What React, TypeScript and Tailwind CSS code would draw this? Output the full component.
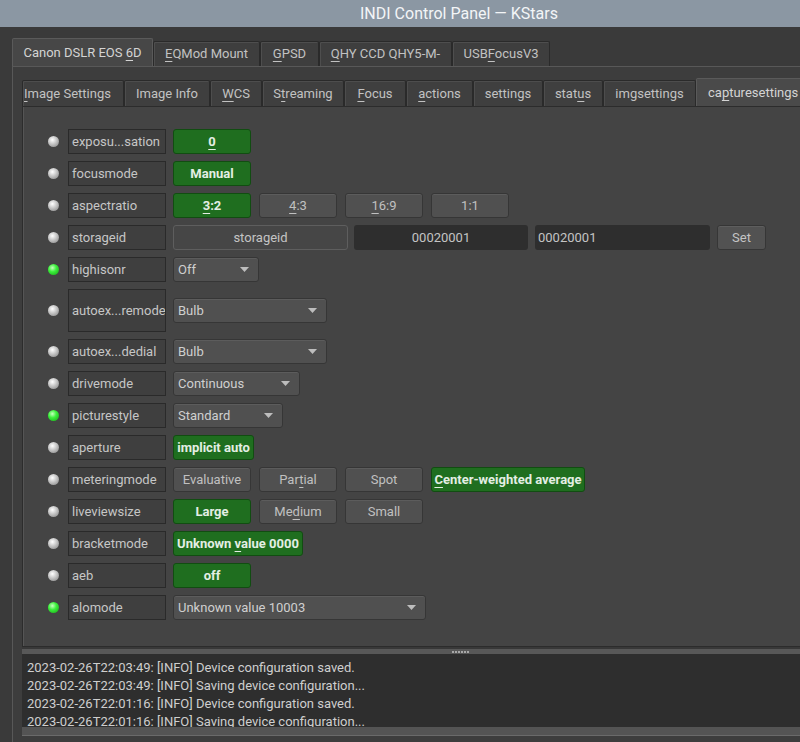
import React from 'react';

// "&" marks the mnemonic letter, drawn underlined like a Qt accelerator
function M({ t }: { t: string }) {
  const i = t.indexOf('&');
  if (i < 0) return <span>{t}</span>;
  return (
    <span className="whitespace-pre">
      {t.slice(0, i)}
      <span className="underline underline-offset-[3px] decoration-1">{t[i + 1]}</span>
      {t.slice(i + 2)}
    </span>
  );
}

type Btn = { t: string; on?: boolean; w?: string };
type Row =
  | { led: 'gray' | 'green'; label: string; kind: 'switch'; btns: Btn[] }
  | { led: 'gray' | 'green'; label: string; kind: 'combo'; value: string; w: string; tall?: boolean }
  | { led: 'gray' | 'green'; label: string; kind: 'text' };

const rows: Row[] = [
  { led: 'gray', label: 'exposu...sation', kind: 'switch', btns: [{ t: '&0', on: true }] },
  { led: 'gray', label: 'focusmode', kind: 'switch', btns: [{ t: 'Manual', on: true }] },
  {
    led: 'gray',
    label: 'aspectratio',
    kind: 'switch',
    btns: [{ t: '&3:2', on: true }, { t: '&4:3' }, { t: '&16:9' }, { t: '1:1' }],
  },
  { led: 'gray', label: 'storageid', kind: 'text' },
  { led: 'green', label: 'highisonr', kind: 'combo', value: 'Off', w: 'w-[86px]' },
  { led: 'gray', label: 'autoex...remode', kind: 'combo', value: 'Bulb', w: 'w-[154px]', tall: true },
  { led: 'gray', label: 'autoex...dedial', kind: 'combo', value: 'Bulb', w: 'w-[154px]' },
  { led: 'gray', label: 'drivemode', kind: 'combo', value: 'Continuous', w: 'w-[127px]' },
  { led: 'green', label: 'picturestyle', kind: 'combo', value: 'Standard', w: 'w-[110px]' },
  { led: 'gray', label: 'aperture', kind: 'switch', btns: [{ t: 'implicit auto', on: true, w: 'w-[81px]' }] },
  {
    led: 'gray',
    label: 'meteringmode',
    kind: 'switch',
    btns: [
      { t: 'Evaluative' },
      { t: 'Par&tial' },
      { t: 'Spot' },
      { t: '&Center-weighted average', on: true, w: 'w-[154px]' },
    ],
  },
  {
    led: 'gray',
    label: 'liveviewsize',
    kind: 'switch',
    btns: [{ t: 'Large', on: true }, { t: 'Me&dium' }, { t: 'Small' }],
  },
  { led: 'gray', label: 'bracketmode', kind: 'switch', btns: [{ t: 'Unknown &value 0000', on: true, w: 'w-[130px]' }] },
  { led: 'gray', label: 'aeb', kind: 'switch', btns: [{ t: 'off', on: true }] },
  { led: 'green', label: 'alomode', kind: 'combo', value: 'Unknown value 10003', w: 'w-[253px]' },
];

const deviceTabs = [
  { t: 'Canon DSLR EOS &6D', w: 'w-[141px]', sel: true },
  { t: '&EQMod Mount', w: 'w-[107px]' },
  { t: '&GPSD', w: 'w-[59px]' },
  { t: '&QHY CCD QHY5-M-', w: 'w-[133px]' },
  { t: 'USB&FocusV3', w: 'w-[98px]' },
];

const groupTabs = [
  { t: '&Image Settings', w: 'w-[102px]', first: true },
  { t: 'Image Info', w: 'w-[86px]' },
  { t: '&WCS', w: 'w-[52px]' },
  { t: 'S&treaming', w: 'w-[82px]' },
  { t: '&Focus', w: 'w-[62px]' },
  { t: '&actions', w: 'w-[67px]' },
  { t: 'settings', w: 'w-[70px]' },
  { t: 'stat&us', w: 'w-[60px]' },
  { t: 'imgsettings', w: 'w-[93px]' },
  { t: 'ca&pturesettings', w: 'w-[120px]', sel: true },
];

const logLines = [
  '2023-02-26T22:03:49: [INFO] Device configuration saved.',
  '2023-02-26T22:03:49: [INFO] Saving device configuration...',
  '2023-02-26T22:01:16: [INFO] Device configuration saved.',
  '2023-02-26T22:01:16: [INFO] Saving device configuration...',
];

function Led({ c }: { c: 'gray' | 'green' }) {
  return (
    <div
      className={
        'w-[11px] h-[11px] rounded-full shrink-0 ' +
        (c === 'green'
          ? 'bg-[radial-gradient(circle_at_40%_35%,#c8ffc0,#3cf03c_40%,#14a014)]'
          : 'bg-[radial-gradient(circle_at_40%_35%,#ffffff,#c4c4c4_45%,#7c7c7c)]')
      }
    />
  );
}

function Arrow() {
  return (
    <svg width="9" height="5" viewBox="0 0 9 5" className="shrink-0">
      <path d="M0 0 L9 0 L4.5 5 Z" fill="#bdbdbd" />
    </svg>
  );
}

function Button({ b }: { b: Btn }) {
  return (
    <div
      className={
        'h-[25px] rounded-[3px] border flex items-center justify-center whitespace-nowrap text-[13px] ' +
        (b.w ?? 'w-[78px]') +
        ' ' +
        (b.on
          ? 'bg-[#1f6e1f] border-[#114d11] text-[#e4eee4] font-bold'
          : 'bg-[#505050] border-[#363636] text-[#c0c0c0] shadow-[inset_0_1px_0_#5c5c5c]')
      }
    >
      <M t={b.t} />
    </div>
  );
}

function Control({ r }: { r: Row }) {
  if (r.kind === 'switch') {
    return (
      <div className="flex gap-[8px]">
        {r.btns.map((b, i) => (
          <Button key={i} b={b} />
        ))}
      </div>
    );
  }
  if (r.kind === 'combo') {
    return (
      <div
        className={
          'h-[25px] rounded-[3px] border border-[#363636] bg-[#505050] shadow-[inset_0_1px_0_#5c5c5c] flex items-center justify-between pl-[4px] pr-[9px] text-[13px] text-[#cfcfcf] ' +
          r.w
        }
      >
        <span>{r.value}</span>
        <Arrow />
      </div>
    );
  }
  return (
    <div className="flex items-center">
      <div className="w-[175px] h-[25px] rounded-[3px] border border-[#5e5e5e] bg-[#464646] flex items-center justify-center text-[13px] text-[#c4c4c4]">
        storageid
      </div>
      <div className="ml-[6px] w-[174px] h-[25px] rounded-[3px] bg-[#2e2e2e] flex items-center justify-center text-[13px] text-[#c4c4c4]">
        00020001
      </div>
      <div className="ml-[7px] w-[175px] h-[25px] rounded-[3px] bg-[#2e2e2e] flex items-center pl-[3px] text-[13px] text-[#c4c4c4]">
        00020001
      </div>
      <div className="ml-[7px] w-[49px] h-[25px] rounded-[3px] border border-[#363636] bg-[#525252] shadow-[inset_0_1px_0_#5e5e5e] flex items-center justify-center text-[13px] text-[#c4c4c4]">
        Set
      </div>
    </div>
  );
}

export default function App() {
  return (
    <div className="w-[800px] h-[742px] overflow-hidden bg-[#3a3a3a] flex flex-col font-['Roboto','Noto_Sans',sans-serif]">
      {/* window title */}
      <div className="h-[27px] shrink-0 bg-[#8b97a3] flex items-center pl-[360px] text-[16px] text-[#f3f5f7] whitespace-nowrap">
        INDI Control Panel — KStars
      </div>

      <div className="flex-1 flex flex-col pl-[12px] pt-[11px] min-h-0">
        {/* device tabs */}
        <div className="h-[28px] shrink-0 flex items-end">
          {deviceTabs.map((d, i) => (
            <div
              key={i}
              className={
                'shrink-0 flex items-center justify-center whitespace-nowrap text-[13px] border border-b-0 rounded-t-[2px] ' +
                d.w +
                ' ' +
                (d.sel
                  ? 'h-[28px] bg-[#474747] border-[#5a5a5a] text-[#d4d4d4]'
                  : 'h-[25px] bg-[#3e3e3e] border-[#2a2a2a] shadow-[inset_1px_1px_0_#4e4e4e] text-[#c2c2c2]')
              }
            >
              <M t={d.t} />
            </div>
          ))}
        </div>

        {/* device page */}
        <div className="flex-1 flex flex-col border-l border-t border-[#585858] bg-[#3d3d3d] pl-[9px] pt-[11px] min-h-0">
          {/* group tabs */}
          <div className="h-[28px] shrink-0 flex items-end overflow-hidden">
            {groupTabs.map((g, i) => (
              <div
                key={i}
                className={
                  'shrink-0 flex items-center whitespace-nowrap text-[13px] border border-b-0 rounded-t-[2px] ' +
                  g.w +
                  ' ' +
                  (g.first ? 'justify-start pl-[1px] ' : 'justify-center ') +
                  (g.sel
                    ? 'h-[28px] bg-[#4a4a4a] border-[#5a5a5a] text-[#d4d4d4] justify-start pl-[11px]'
                    : 'h-[26px] bg-[#3f3f3f] border-[#2a2a2a] shadow-[inset_1px_1px_0_#4d4d4d] text-[#c2c2c2]')
                }
              >
                <M t={g.t} />
              </div>
            ))}
          </div>

          {/* property panel */}
          <div className="h-[541px] shrink-0 bg-[#444444] border border-r-0 border-[#2c2c2c] shadow-[inset_1px_0_0_#555555] pl-[25px] pt-[22px] flex flex-col gap-[7px]">
            {rows.map((r, i) => {
              const tall = r.kind === 'combo' && r.tall;
              return (
                <div key={i} className={'flex items-center ' + (tall ? 'h-[43px]' : 'h-[25px]')}>
                  <Led c={r.led} />
                  <div
                    className={
                      'ml-[9px] w-[98px] shrink-0 border border-[#2a2a2a] bg-[#3f3f3f] flex items-center pl-[3px] text-[13px] text-[#c6c6c6] whitespace-nowrap overflow-hidden ' +
                      (tall ? 'h-[43px]' : 'h-[25px]')
                    }
                  >
                    {r.label}
                  </div>
                  <div className="ml-[7px]">
                    <Control r={r} />
                  </div>
                </div>
              );
            })}
          </div>

          {/* splitter handle */}
          <div className="h-[7px] shrink-0 flex flex-col">
            <div className="h-[2px] bg-[#383838]" />
            <div className="h-[5px] bg-[#585858] flex items-center pl-[430px] gap-[1px]">
              {[0, 1, 2, 3, 4, 5].map((k) => (
                <div key={k} className="w-[2px] h-[2px] bg-[#a8a8a8]" />
              ))}
            </div>
          </div>

          {/* log */}
          <div className="h-[73px] shrink-0 bg-[#2e2e2e] pl-[5px] pt-[5px] overflow-hidden text-[13px] leading-[18px] text-[#cfcfcf] whitespace-nowrap">
            {logLines.map((l, i) => (
              <div key={i}>{l}</div>
            ))}
          </div>

          <div className="h-[9px] shrink-0 bg-[#545454] border-b border-[#6a6a6a]" />
        </div>
      </div>
    </div>
  );
}
